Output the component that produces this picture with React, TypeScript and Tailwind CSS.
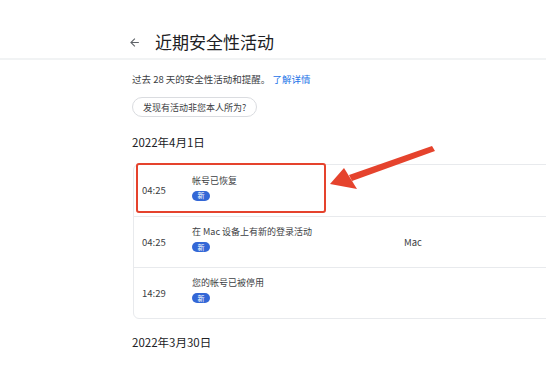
import React from "react";

const font = { fontFamily: '"Noto Sans CJK SC", "Noto Sans", sans-serif' };

const rows = [
  { time: "04:25", title: "帐号已恢复", device: "" },
  { time: "04:25", title: "在 Mac 设备上有新的登录活动", device: "Mac" },
  { time: "14:29", title: "您的帐号已被停用", device: "" },
];

function Badge() {
  return (
    <span className="inline-flex items-center justify-center w-[18px] h-[10px] rounded-full bg-[#3367d6] text-white text-[7px] leading-none">
      新
    </span>
  );
}

export default function App() {
  return (
    <div
      className="relative w-[546px] h-[366px] overflow-hidden bg-white text-[#202124]"
      style={font}
    >
      {/* Header */}
      <div className="h-[60px] border-b-2 border-[#f1f3f4] flex items-center pl-[128px] pt-[30px] pb-[4px]">
        <svg width="13" height="13" viewBox="0 0 24 24" className="text-[#5f6368]">
          <path
            d="M20 11H7.83l5.59-5.59L12 4l-8 8 8 8 1.41-1.41L7.83 13H20v-2z"
            fill="currentColor"
          />
        </svg>
        <h1 className="ml-[14px] text-[17px] leading-[22px] text-[#202124]">近期安全性活动</h1>
      </div>

      <div className="pl-[132px]">
        <p className="mt-[12px] text-[9.5px] leading-[14px] text-[#3c4043]">
          过去 28 天的安全性活动和提醒。 <span className="text-[#1a73e8]">了解详情</span>
        </p>
        <button className="mt-[11px] h-[20px] px-[10px] rounded-full border border-[#dadce0] text-[9px] leading-none text-[#3c4043]">
          发现有活动非您本人所为?
        </button>

        <h2 className="mt-[17px] text-[11.5px] leading-[16px] text-[#202124]">2022年4月1日</h2>

        <div className="mt-[14px] ml-[1px] w-[470px] border border-[#e8eaed] rounded-[6px] overflow-hidden">
          {rows.map((r, i) => (
            <div
              key={i}
              className={`h-[51px] flex items-center ${i > 0 ? "border-t border-[#e8eaed]" : ""}`}
            >
              <div className="w-[58px] pl-[8px] text-[9.5px] text-[#3c4043]">{r.time}</div>
              <div className="w-[212px] flex flex-col items-start gap-[4px] pb-[6px]">
                <span className="text-[9px] leading-[12px] text-[#3c4043]">{r.title}</span>
                <Badge />
              </div>
              <div className="text-[9.5px] text-[#3c4043]">{r.device}</div>
            </div>
          ))}
        </div>

        <h2 className="mt-[15px] text-[11.5px] leading-[16px] text-[#202124]">2022年3月30日</h2>
      </div>

      {/* Annotation: red highlight box */}
      <div className="absolute left-[136px] top-[163px] w-[190px] h-[50px] border-2 border-[#e5432d] rounded-[3px]" />

      {/* Annotation: arrow */}
      <svg className="absolute left-0 top-0" width="546" height="366" viewBox="0 0 546 366">
        <path d="M432 146 L435 151 L352 181 L349 175 Z" fill="#e5432d" />
        <path d="M330 184 L344 168 L357 189 Z" fill="#e5432d" />
      </svg>
    </div>
  );
}
